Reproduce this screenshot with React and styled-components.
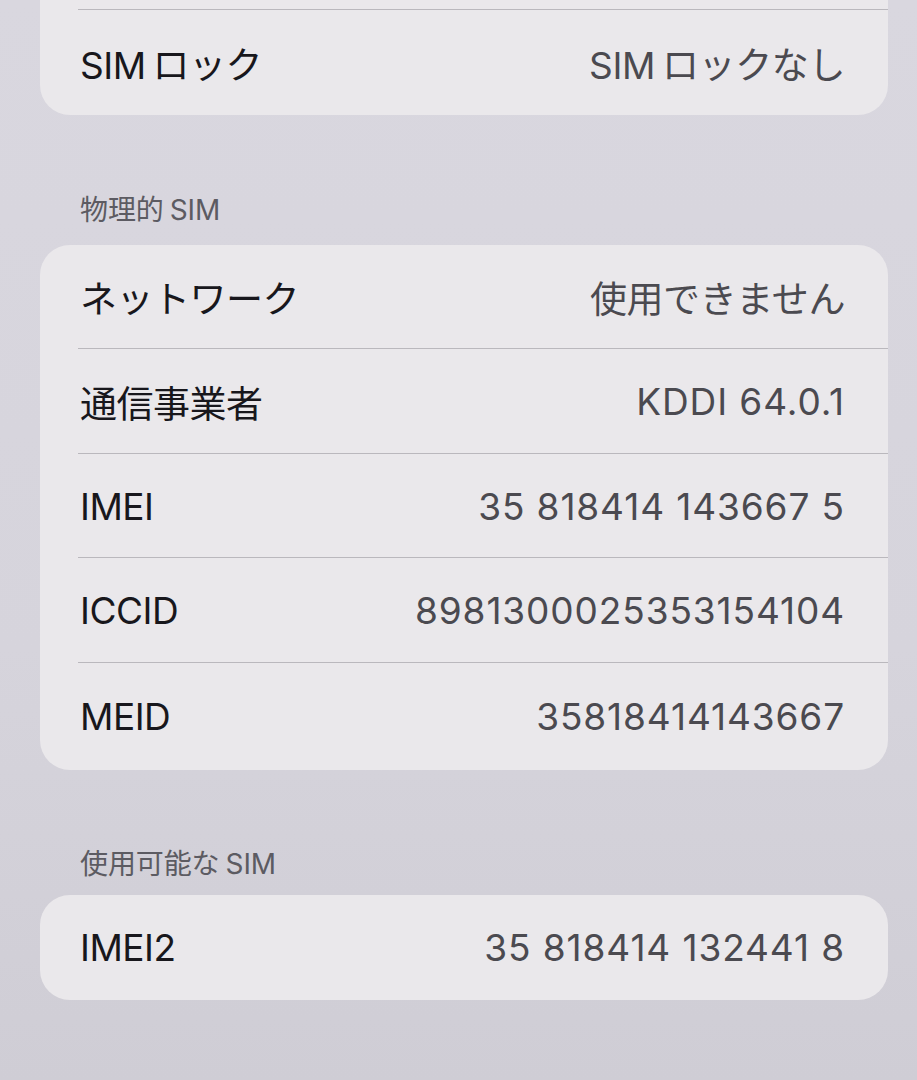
import React from "react";
import styled, { createGlobalStyle } from "styled-components";

const GlobalStyle = createGlobalStyle`
  html, body {
    margin: 0;
    padding: 0;
    background: #d8d6de;
  }
  body {
    font-family: Inter, "Noto Sans CJK JP", sans-serif;
    -webkit-font-smoothing: antialiased;
  }
`;

const Screen = styled.div`
  width: 917px;
  height: 1080px;
  overflow: hidden;
  background: linear-gradient(180deg, #d9d7df 0%, #d6d4dc 60%, #cfcdd5 100%);
  box-sizing: border-box;
  padding: 0 29px 0 40px;
`;

const Inner = styled.div`
  margin-top: -94px;
  display: flex;
  flex-direction: column;
`;

const Card = styled.div`
  background: #eae8eb;
  border-radius: 30px;
  overflow: hidden;
`;

const Row = styled.div`
  height: ${({ h }) => h || 104}px;
  display: flex;
  align-items: center;
  justify-content: space-between;
  padding: 0 43px 0 40px;
  box-sizing: border-box;
  position: relative;
  &:not(:last-child)::after {
    content: "";
    position: absolute;
    left: 38px;
    right: 0;
    bottom: 0;
    height: 1.5px;
    background: #bab8bd;
  }
`;

const Label = styled.span`
  font-size: 37px;
  color: #18171c;
  letter-spacing: -0.5px;
`;

const Value = styled.span`
  font-size: 37px;
  color: #4b4a50;
  letter-spacing: ${({ num }) => (num ? "0.9px" : "-0.4px")};
`;

const Gap = styled.span`
  display: inline-block;
  width: ${({ w }) => w || 7}px;
`;

const Header = styled.div`
  padding: ${({ top }) => top}px 0 ${({ bottom }) => bottom}px 40px;
  font-size: 28px;
  color: #5c5b62;
  letter-spacing: -0.1px;
  line-height: 30px;
`;

const InfoRow = ({ label, value, h, num }) => (
  <Row h={h}>
    <Label>{label}</Label>
    <Value num={num}>{value}</Value>
  </Row>
);

const physical = [
  ["ネットワーク", "使用できません", 104, false],
  ["通信事業者", "KDDI 64.0.1", 105, true],
  ["IMEI", "35 818414 143667 5", 104, true],
  ["ICCID", "8981300025353154104", 105, true],
  ["MEID", "35818414143667", 107, true],
];

export default function App() {
  return (
    <>
      <GlobalStyle />
      <Screen>
        <Inner>
          <Card>
            <InfoRow label="" value="" h={104} />
            <InfoRow
              label={<>SIM<Gap />ロック</>}
              value={<>SIM<Gap />ロックなし</>}
              h={105}
            />
          </Card>
          <Header top={80} bottom={20}>物理的<Gap w={6} />SIM</Header>
          <Card>
            {physical.map(([l, v, h, n]) => (
              <InfoRow key={l} label={l} value={v} h={h} num={n} />
            ))}
          </Card>
          <Header top={79} bottom={16}>使用可能な<Gap w={6} />SIM</Header>
          <Card>
            <InfoRow label="IMEI2" value="35 818414 132441 8" h={105} num />
          </Card>
        </Inner>
      </Screen>
    </>
  );
}
